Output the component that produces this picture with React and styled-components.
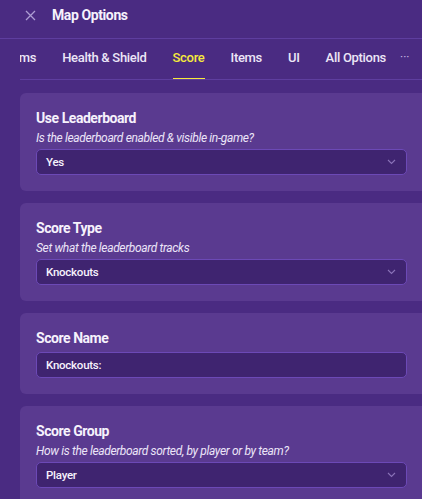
import React from "react";
import styled, { createGlobalStyle } from "styled-components";

const Global = createGlobalStyle`
  html, body { margin: 0; padding: 0; background: #4a2b82; }
  body { font-family: Roboto, Inter, "Noto Sans", sans-serif; color: #f4f0fb; -webkit-font-smoothing: antialiased; }
  * { box-sizing: border-box; }
`;

const Page = styled.div`
  width: 422px;
  height: 499px;
  overflow: hidden;
  background: #4a2b82;
  display: flex;
  flex-direction: column;
`;

const Header = styled.div`
  height: 39px;
  flex: none;
  display: flex;
  align-items: center;
  padding: 0 0 8px 25px;
  gap: 16px;
  border-bottom: 1px solid #5e3e9f;
`;

const CloseBtn = styled.button`
  width: 11px;
  height: 11px;
  padding: 0;
  border: 0;
  background: none;
  display: flex;
  align-items: center;
  justify-content: center;
  cursor: pointer;
`;

const Title = styled.h1`
  margin: 0;
  font-size: 14px;
  font-weight: 700;
  letter-spacing: -0.4px;
  color: #f6f2fc;
`;

const TabBar = styled.div`
  height: 41px;
  flex: none;
  display: flex;
  align-items: stretch;
  margin-left: 20px;
  border-bottom: 1px solid #5e3e9f;
`;

const TabScroller = styled.div`
  flex: 1;
  min-width: 0;
  overflow: hidden;
  display: flex;
  justify-content: flex-end;
  align-items: stretch;
`;

const Tab = styled.button`
  flex: none;
  position: relative;
  border: 0;
  background: none;
  padding: 0 13px 4px;
  font-family: inherit;
  font-size: 13px;
  font-weight: 500;
  letter-spacing: -0.3px;
  color: ${(p) => (p.$active ? "#f6ea3c" : "#ece6f7")};
  cursor: pointer;
  &::after {
    content: "";
    display: ${(p) => (p.$active ? "block" : "none")};
    position: absolute;
    left: 13px;
    right: 13px;
    bottom: -1px;
    height: 2px;
    background: #f6ea3c;
  }
`;

const More = styled.button`
  flex: none;
  width: 23px;
  border: 0;
  padding: 0 0 5px 1px;
  text-align: left;
  background: none;
  color: #c6b8e2;
  font-family: inherit;
  font-size: 12px;
  cursor: pointer;
`;

const Content = styled.div`
  flex: 1;
  padding: 13px 0 0 20px;
  display: flex;
  flex-direction: column;
  gap: 12px;
`;

const Card = styled.section`
  background: #5a3a90;
  border-radius: 6px 0 0 6px;
  padding: 16px 15px 16px 16px;
  display: flex;
  flex-direction: column;
`;

const CardTitle = styled.h2`
  margin: 0 0 5px;
  font-size: 14px;
  line-height: 18px;
  font-weight: 700;
  letter-spacing: -0.45px;
  color: #f6f2fc;
`;

const CardDesc = styled.p`
  margin: -3px 0 2px;
  font-size: 12px;
  line-height: 18px;
  font-style: italic;
  letter-spacing: -0.35px;
  color: #ece5f8;
`;

const Field = styled.div`
  height: 26px;
  display: flex;
  align-items: center;
  justify-content: space-between;
  padding: 0 10px 0 9px;
  background: #3f2470;
  border: 1px solid #6c49b6;
  border-radius: 5px;
  font-size: 11.5px;
  font-weight: 500;
  letter-spacing: -0.25px;
  color: #f6f2fc;
`;

const Chevron = () => (
  <svg width="9" height="6" viewBox="0 0 9 6" fill="none">
    <path d="M1 1l3.5 3.5L8 1" stroke="#8a72b8" strokeWidth="1.1" />
  </svg>
);

const CloseIcon = () => (
  <svg width="11" height="11" viewBox="0 0 11 11" fill="none">
    <path d="M1 1l9 9M10 1l-9 9" stroke="#ad9dd3" strokeWidth="1.3" />
  </svg>
);

const tabs = ["Teams", "Health & Shield", "Score", "Items", "UI", "All Options"];

const options = [
  { title: "Use Leaderboard", desc: "Is the leaderboard enabled & visible in-game?", value: "Yes", select: true },
  { title: "Score Type", desc: "Set what the leaderboard tracks", value: "Knockouts", select: true },
  { title: "Score Name", value: "Knockouts:", select: false },
  { title: "Score Group", desc: "How is the leaderboard sorted, by player or by team?", value: "Player", select: true },
];

export default function App() {
  return (
    <Page>
      <Global />
      <Header>
        <CloseBtn aria-label="Close"><CloseIcon /></CloseBtn>
        <Title>Map Options</Title>
      </Header>
      <TabBar>
        <TabScroller>
          {tabs.map((t) => (
            <Tab key={t} $active={t === "Score"}>{t}</Tab>
          ))}
        </TabScroller>
        <More aria-label="More">···</More>
      </TabBar>
      <Content>
        {options.map((o) => (
          <Card key={o.title}>
            <CardTitle>{o.title}</CardTitle>
            {o.desc && <CardDesc>{o.desc}</CardDesc>}
            <Field>
              <span>{o.value}</span>
              {o.select && <Chevron />}
            </Field>
          </Card>
        ))}
      </Content>
    </Page>
  );
}
